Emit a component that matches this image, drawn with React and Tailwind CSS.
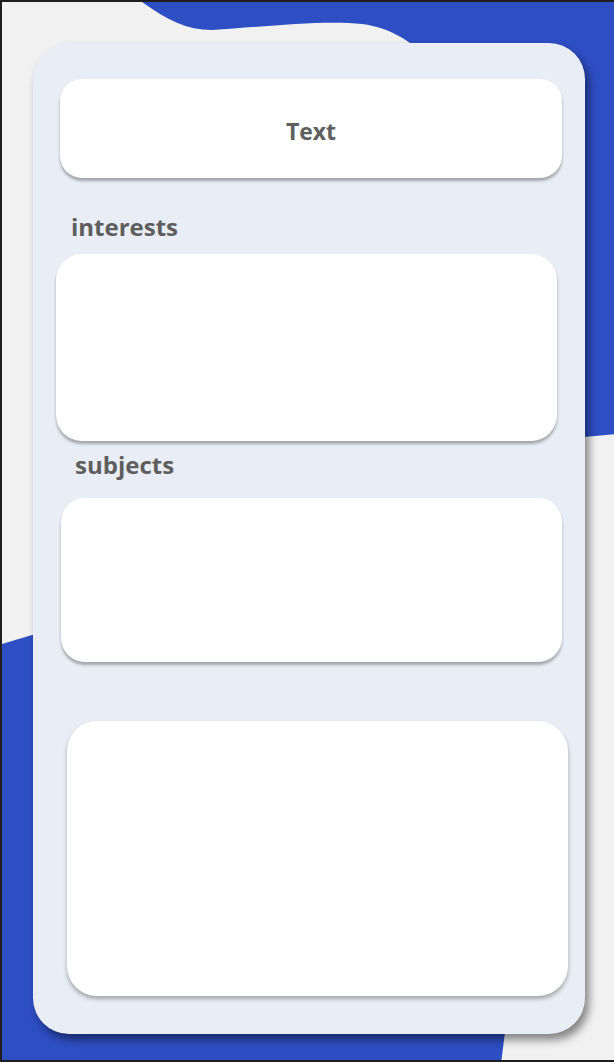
import React from 'react'

function Waves() {
  return (
    <svg className="absolute inset-0" width="614" height="1062" viewBox="0 0 614 1062">
      <path
        d="M140,0 C165,18 185,28 210,28 C260,25 320,18 360,22 C390,26 410,40 430,60 L560,100 L560,437 L614,432 L614,0 Z"
        fill="#2e4ec3"
      />
      <path d="M0,642 L40,630 L560,600 L560,1020 L503,1030 L499,1062 L0,1062 Z" fill="#2e4ec3" />
    </svg>
  )
}

export default function App() {
  return (
    <div
      className="relative w-[614px] h-[1062px] overflow-hidden bg-[#f1f1f1] border-t-2 border-l-2 border-b-2 border-[#1e1e1e]"
      style={{ fontFamily: '"Open Sans", Inter, sans-serif' }}
    >
      <Waves />
      <div className="relative pt-[41px] pl-[31px]">
        <div className="w-[552px] h-[991px] bg-[#e9edf5] rounded-[36px] shadow-[4px_6px_8px_rgba(0,0,0,0.45)] pt-[36px] flex flex-col">
          <div className="ml-[27px] w-[502px] h-[99px] bg-white rounded-[22px] shadow-[0_3px_3px_rgba(0,0,0,0.3)] flex items-center justify-center pt-[5px]">
            <span className="text-[23px] leading-[26px] font-bold text-[#5e5e5e]">Text</span>
          </div>
          <div className="ml-[38px] mt-[35px] h-[28px] leading-[28px] text-[24px] font-bold text-[#5e5e5e]">interests</div>
          <div className="ml-[23px] mt-[13px] w-[501px] h-[187px] bg-white rounded-[26px] shadow-[0_3px_3px_rgba(0,0,0,0.3)]"></div>
          <div className="ml-[42px] mt-[10px] h-[28px] leading-[28px] text-[24px] font-bold text-[#5e5e5e]">subjects</div>
          <div className="ml-[28px] mt-[19px] w-[501px] h-[164px] bg-white rounded-[24px] shadow-[0_3px_3px_rgba(0,0,0,0.3)]"></div>
          <div className="ml-[34px] mt-[59px] w-[501px] h-[275px] bg-white rounded-[30px] shadow-[0_3px_4px_rgba(0,0,0,0.3)]"></div>
        </div>
      </div>
    </div>
  )
}
